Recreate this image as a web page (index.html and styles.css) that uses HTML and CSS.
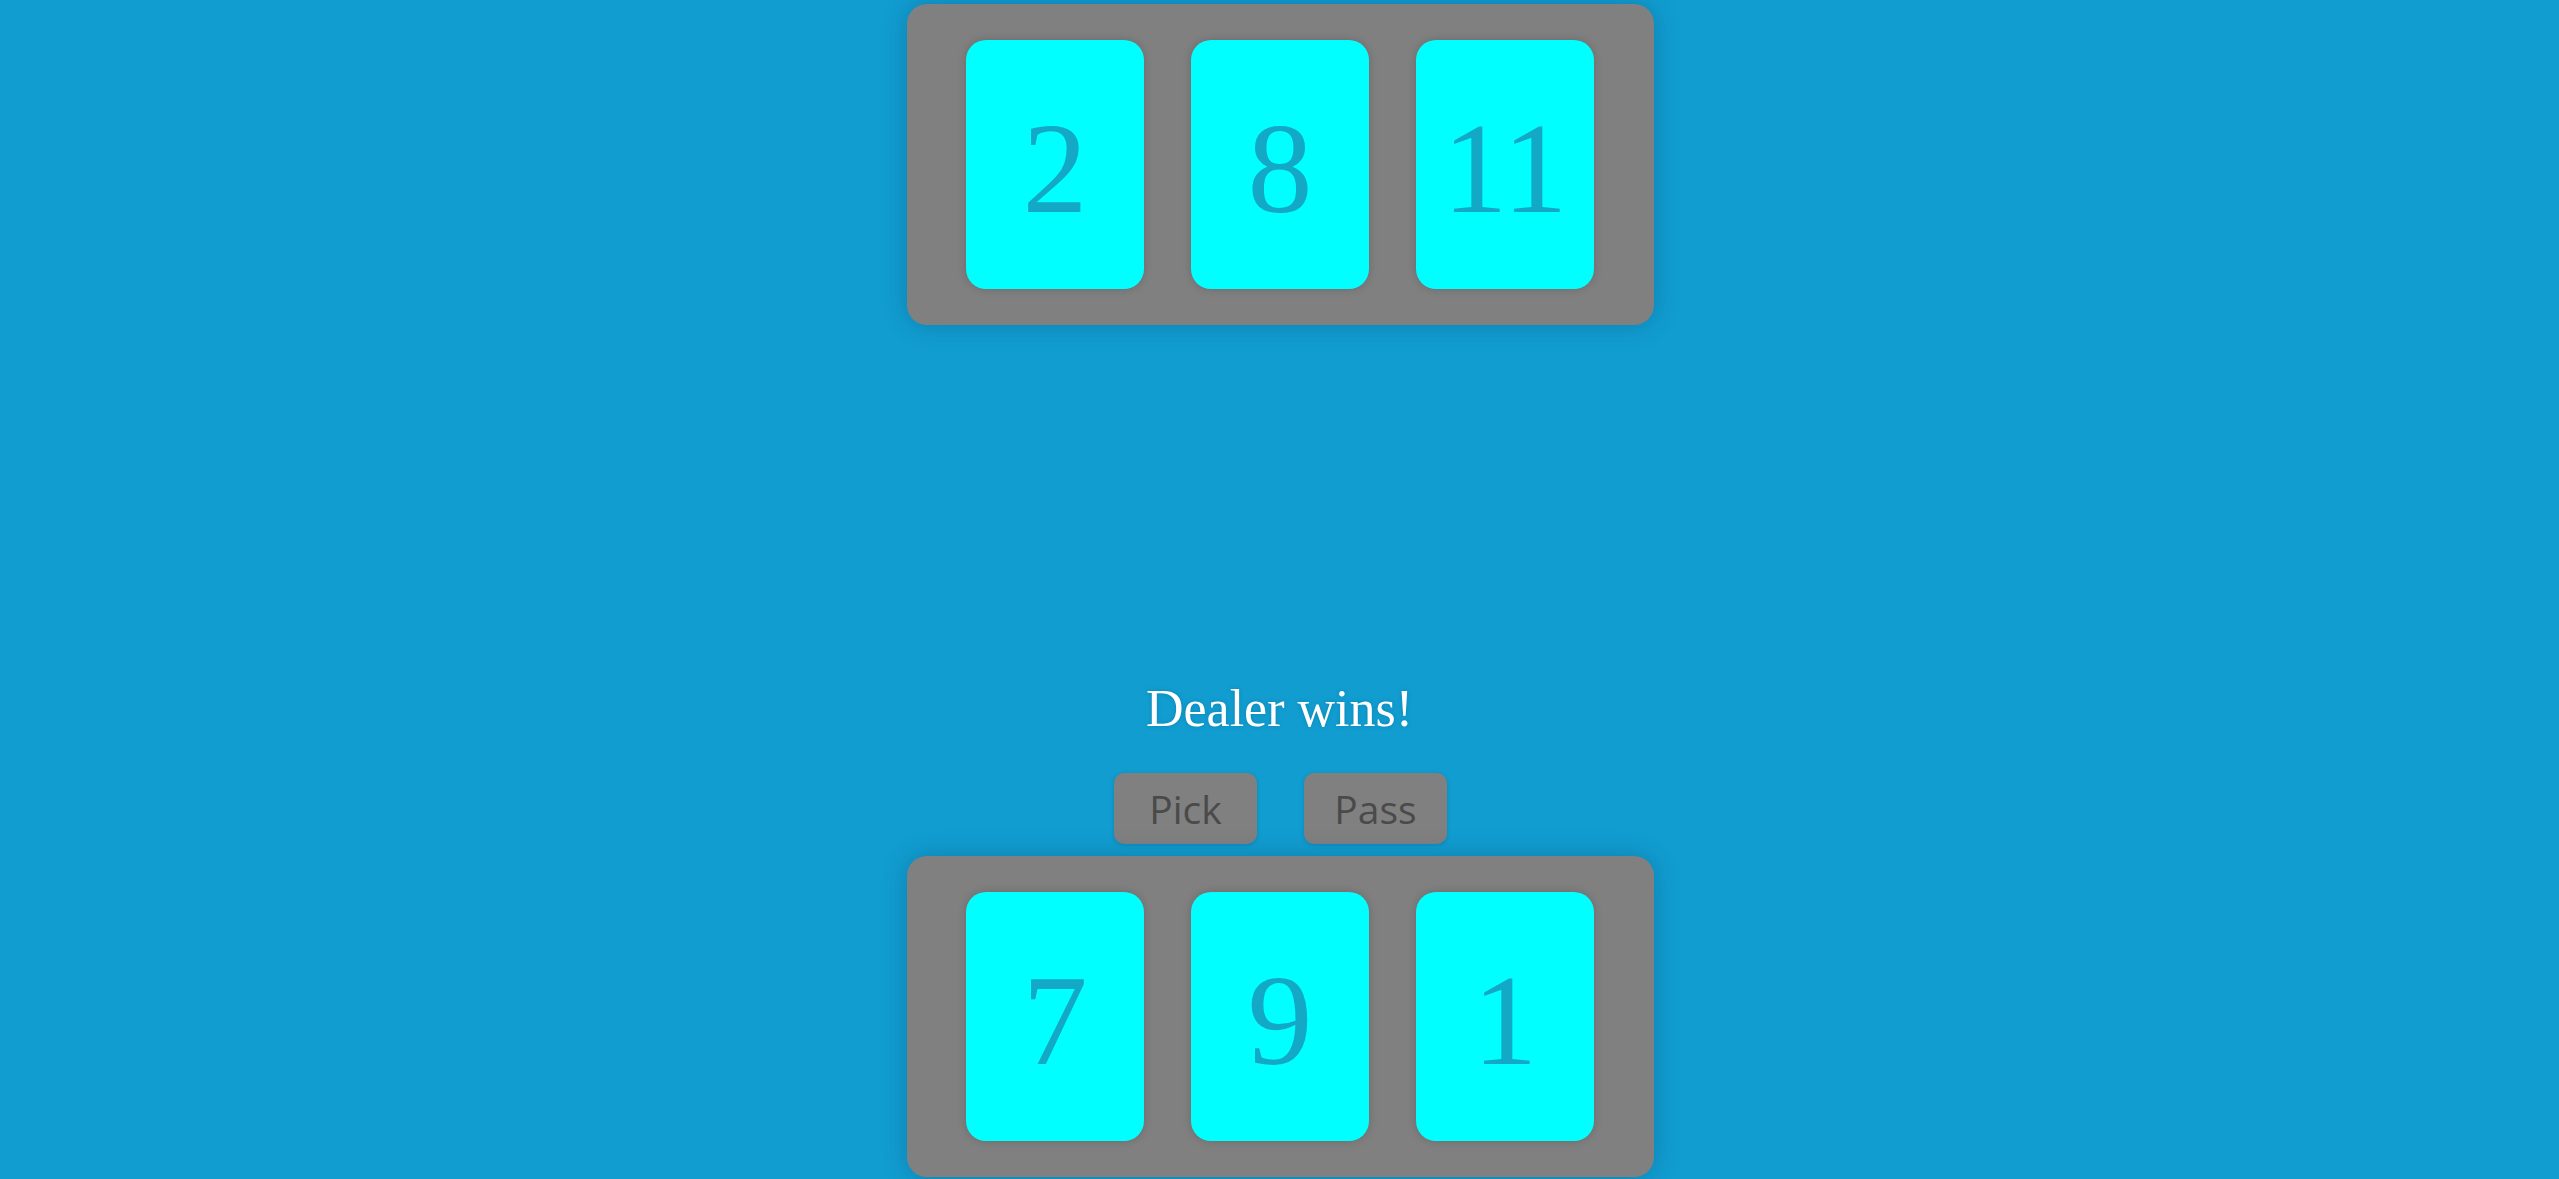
FILE: index.html
```html
<!DOCTYPE html>
<html lang="en">
<head>
<meta charset="utf-8">
<title>Blackjack</title>
<link rel="stylesheet" href="styles.css">
</head>
<body>
<div class="table">
  <div class="hand hand-dealer">
    <div class="card"><span class="num">2</span></div>
    <div class="card"><span class="num">8</span></div>
    <div class="card"><span class="num">11</span></div>
  </div>
  <div class="spacer"></div>
  <div class="message">Dealer wins!</div>
  <div class="controls">
    <button class="btn">Pick</button>
    <button class="btn">Pass</button>
  </div>
  <div class="hand hand-player">
    <div class="card"><span class="num">7</span></div>
    <div class="card"><span class="num">9</span></div>
    <div class="card"><span class="num">1</span></div>
  </div>
</div>
</body>
</html>
```

FILE: styles.css
```css
html, body {
  margin: 0;
  padding: 0;
  height: 100%;
}
body {
  background: #119dd0;
  overflow: hidden;
}
.table {
  height: 100vh;
  box-sizing: border-box;
  display: flex;
  flex-direction: column;
  align-items: center;
  padding-top: 4px;
  padding-bottom: 2px;
}
.hand {
  width: 747px;
  height: 321px;
  box-sizing: border-box;
  padding: 36px 59px;
  background: #808080;
  border-radius: 20px;
  display: flex;
  gap: 47px;
  margin-left: 2px;
  box-shadow: 0 0 24px rgba(0, 40, 80, 0.25);
}
.card {
  width: 178px;
  height: 249px;
  background: #00ffff;
  border-radius: 20px;
  display: flex;
  align-items: center;
  justify-content: center;
  box-shadow: 0 0 10px rgba(0, 0, 0, 0.18);
}
.num {
  font-family: "Liberation Serif", "DejaVu Serif", serif;
  font-size: 130px;
  line-height: 1;
  color: #13a8c5;
  position: relative;
  top: 3px;
}
.spacer {
  flex: 1;
}
.message {
  font-family: "Liberation Serif", "DejaVu Serif", serif;
  font-size: 52px;
  line-height: 60px;
  color: #ffffff;
  text-shadow: 0 0 4px rgba(0, 60, 100, 0.25);
  margin-bottom: 34px;
}
.controls {
  display: flex;
  gap: 47px;
  margin-bottom: 12px;
  margin-left: 2px;
}
.btn {
  width: 143px;
  height: 71px;
  border: none;
  border-radius: 10px;
  background: #808080;
  color: #4a4a4a;
  font-family: "Open Sans", "Liberation Sans", sans-serif;
  font-size: 39px;
  line-height: 1;
  padding: 0;
  display: flex;
  align-items: center;
  justify-content: center;
  box-shadow: 0 1px 4px rgba(0, 40, 80, 0.2);
}
```
